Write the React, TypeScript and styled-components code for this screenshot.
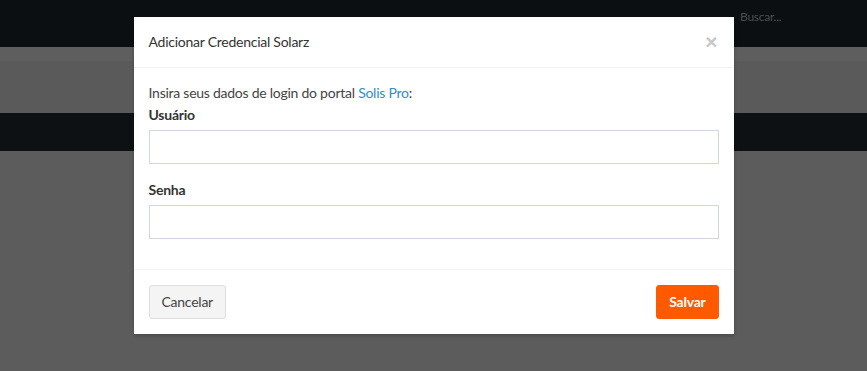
import React from "react";
import styled, { createGlobalStyle } from "styled-components";

const Global = createGlobalStyle`
  html, body { margin: 0; padding: 0; }
  body {
    width: 867px;
    height: 371px;
    overflow: hidden;
    font-family: "Source Sans Pro", Lato, "Liberation Sans", sans-serif;
    font-size: 14px;
    line-height: 20px;
    letter-spacing: -0.25px;
    color: #333;
    background: #5c5c5c;
  }
  * { box-sizing: border-box; }
`;

const Page = styled.div`
  position: relative;
  width: 867px;
  height: 371px;
  display: flex;
  flex-direction: column;
  background: #5c5c5c;
`;

const Navbar = styled.div`
  height: 47px;
  background: #0b0f11;
  display: flex;
  align-items: flex-start;
  padding: 8px 0 0 740px;
`;

const Search = styled.span`
  font-size: 12px;
  line-height: 18px;
  color: #4a4d50;
`;

const SubBar = styled.div`
  height: 14px;
  background: #5e5e5e;
`;

const ContentBand = styled.div`
  height: 52px;
  background: #5a5a5a;
`;

const DarkBand = styled.div`
  height: 38px;
  background: #0d1113;
`;

const Rest = styled.div`
  flex: 1;
  background: #5c5c5c;
`;

const Overlay = styled.div`
  position: absolute;
  inset: 0;
  display: flex;
  justify-content: center;
  align-items: flex-start;
  padding-top: 17px;
`;

const Modal = styled.div`
  width: 600px;
  background: #fff;
  box-shadow: 0 2px 4px rgba(0, 0, 0, 0.2);
`;

const Header = styled.div`
  display: flex;
  align-items: center;
  justify-content: space-between;
  padding: 15px;
  border-bottom: 1px solid #f4f4f4;
`;

const Title = styled.h4`
  margin: 0;
  font-size: 14px;
  font-weight: 400;
  line-height: 20px;
  color: #333;
`;

const Close = styled.button`
  border: 0;
  background: transparent;
  padding: 0;
  margin-right: 1px;
  font-family: "Liberation Sans", sans-serif;
  font-size: 21px;
  font-weight: 700;
  line-height: 20px;
  color: #c8c8c8;
  cursor: pointer;
`;

const Body = styled.div`
  padding: 15px;
`;

const Intro = styled.p`
  margin: 0 0 2px;
  color: #444;
`;

const Link = styled.a`
  color: #2a8fcf;
  text-decoration: none;
`;

const Group = styled.div<{ $last?: boolean }>`
  margin-bottom: ${(p) => (p.$last ? "15px" : "16px")};
`;

const Label = styled.label`
  display: block;
  margin-bottom: 5px;
  font-weight: 700;
  color: #333;
`;

const Input = styled.input`
  display: block;
  width: 100%;
  height: 34px;
  border: 1px solid #d2d6de;
  border-radius: 0;
  padding: 6px 12px;
  font: inherit;
  outline: none;
`;

const Footer = styled.div`
  display: flex;
  justify-content: space-between;
  padding: 15px;
  border-top: 1px solid #f4f4f4;
`;

const Button = styled.button<{ $primary?: boolean }>`
  height: 34px;
  padding: 6px 12px;
  font-family: inherit;
  font-size: 14px;
  line-height: 20px;
  letter-spacing: -0.25px;
  border-radius: 3px;
  cursor: pointer;
  border: 1px solid ${(p) => (p.$primary ? "#ff5a00" : "#ddd")};
  background: ${(p) => (p.$primary ? "#ff5a00" : "#f4f4f4")};
  color: ${(p) => (p.$primary ? "#fff" : "#444")};
  font-weight: ${(p) => (p.$primary ? 700 : 400)};
`;

export default function App() {
  return (
    <>
      <Global />
      <Page>
        <Navbar>
          <Search>Buscar...</Search>
        </Navbar>
        <SubBar />
        <ContentBand />
        <DarkBand />
        <Rest />
        <Overlay>
          <Modal>
            <Header>
              <Title>Adicionar Credencial Solarz</Title>
              <Close aria-label="Fechar">×</Close>
            </Header>
            <Body>
              <Intro>
                Insira seus dados de login do portal <Link href="#">Solis Pro</Link>:
              </Intro>
              <Group>
                <Label>Usuário</Label>
                <Input type="text" />
              </Group>
              <Group $last>
                <Label>Senha</Label>
                <Input type="password" />
              </Group>
            </Body>
            <Footer>
              <Button>Cancelar</Button>
              <Button $primary>Salvar</Button>
            </Footer>
          </Modal>
        </Overlay>
      </Page>
    </>
  );
}
